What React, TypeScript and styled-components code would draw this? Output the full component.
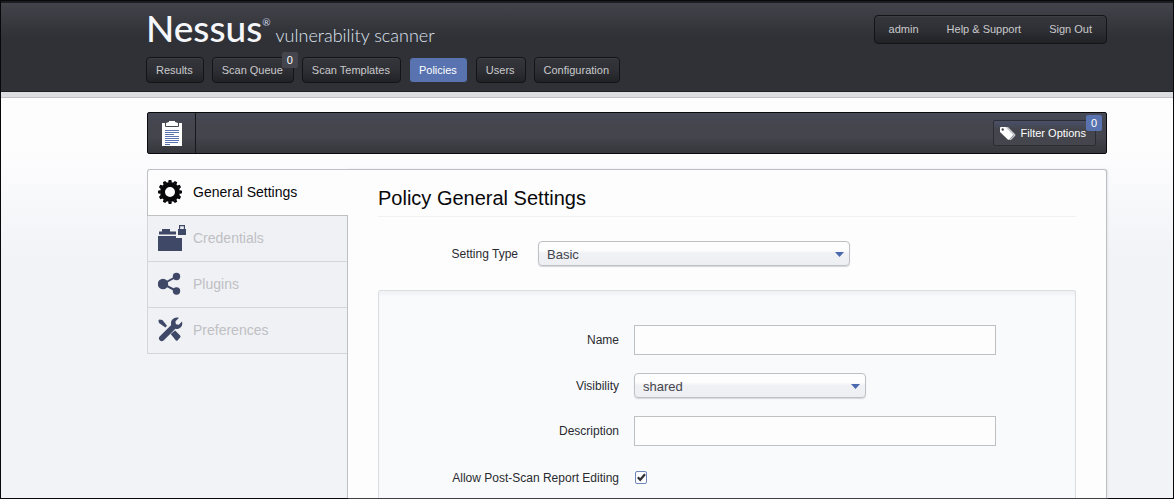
import React from "react";
import styled, { createGlobalStyle, css } from "styled-components";

const GlobalStyle = createGlobalStyle`
  *, *::before, *::after { box-sizing: border-box; }
  body {
    margin: 0;
    background: #f2f3f7;
    font-family: Arial, "Liberation Sans", sans-serif;
    font-size: 12px;
    color: #2a2b30;
  }
  a { color: inherit; text-decoration: none; }
`;

const Page = styled.div`
  min-height: 100vh;
  display: flex;
  flex-direction: column;
  border: 1px solid #08080a;
  background: linear-gradient(#fdfdfe 150px, #f2f3f7 256px);
`;

const Header = styled.header`
  display: flex;
  justify-content: space-between;
  align-items: flex-start;
  height: 97px;
  padding: 0 66px 0 145px;
  border-top: 2px solid #1c1d21;
  border-bottom: 1px solid #bfc0c4;
  box-shadow: inset 0 -5px 0 #dcdde1, inset 0 -6px 0 #1f2024;
  background: linear-gradient(#43444b, #303136 34px);
`;

const Logo = styled.a`
  display: flex;
  align-items: baseline;
  height: 40px;
  margin-top: 5px;
  font-family: Lato, sans-serif;
  color: #f6f7fb;
  line-height: 40px;
`;

const Brand = styled.span`
  font-size: 37px;
  font-weight: 500;
`;

const Registered = styled.sup`
  align-self: flex-start;
  font-size: 10px;
  line-height: 28px;
  color: #c9d2e8;
`;

const Tagline = styled.span`
  margin-left: 5px;
  font-size: 18px;
  font-weight: 300;
  color: #dfe4f1;
`;

const Nav = styled.nav`
  display: flex;
  gap: 8px;
  margin-top: 9px;
`;

const raised = css`
  border: 1px solid #131417;
  border-radius: 4px;
  background: linear-gradient(#35363b, #2f3035 50%, #212226);
  box-shadow: inset 0 1px 0 #3d3e44;
`;

const NavItem = styled.a<{ $active?: boolean }>`
  position: relative;
  height: 26px;
  padding: 0 10px 0 9px;
  font-size: 11px;
  line-height: 25px;
  color: #c9c9cb;
  white-space: nowrap;
  ${raised}
  ${(p) =>
    p.$active &&
    css`
      color: #ffffff;
      background: #5873b0;
      border-color: #303136;
      box-shadow: none;
    `}
`;

const Badge = styled.span<{ $accent?: boolean }>`
  position: absolute;
  top: -6px;
  right: ${(p) => (p.$accent ? "-7px" : "-5px")};
  width: 16px;
  height: 16px;
  border-radius: 2px;
  background: ${(p) => (p.$accent ? "#5873b0" : "#44454d")};
  color: #ffffff;
  font-size: 11px;
  line-height: 16px;
  text-align: center;
`;

const UserMenu = styled.nav`
  display: flex;
  gap: 28px;
  height: 29px;
  margin-top: 12px;
  padding: 0 14px;
  font-size: 11px;
  line-height: 27px;
  color: #c9c9cb;
  white-space: nowrap;
  ${raised}
`;

const Body = styled.div`
  flex: 1;
  display: flex;
  flex-direction: column;
  padding: 14px 66px 0 146px;
`;

const Toolbar = styled.div`
  display: flex;
  justify-content: space-between;
  align-items: center;
  height: 42px;
  padding-right: 10px;
  border: 1px solid #0b0b0e;
  border-radius: 2px;
  background: linear-gradient(#474a57, #44454d 30%, #44454d 60%, #36373c);
`;

const ToolbarIcon = styled.span`
  display: flex;
  align-items: center;
  justify-content: center;
  width: 48px;
  height: 40px;
  border-right: 1px solid #17181b;
`;

const FilterButton = styled.button`
  position: relative;
  display: flex;
  align-items: center;
  gap: 5px;
  height: 26px;
  padding: 0 9px 0 6px;
  border: 1px solid #2c2d32;
  border-radius: 2px;
  background: linear-gradient(#4a5068, #44454d 35%);
  color: #ffffff;
  font: 11px Arial, "Liberation Sans", sans-serif;
  white-space: nowrap;
`;

const Main = styled.div`
  flex: 1;
  display: flex;
  margin-top: 15px;
`;

const Sidebar = styled.nav`
  flex: 0 0 200px;
`;

const Tab = styled.a<{ $active?: boolean }>`
  display: grid;
  grid-template-columns: 29px 1fr;
  gap: 6px;
  align-items: center;
  height: 46px;
  padding: 0 0 2px 10px;
  border: solid #d5d6da;
  border-width: 0 0 1px 1px;
  background: #f0f1f5;
  color: #bfc0c3;
  font-size: 14px;
  ${(p) =>
    p.$active &&
    css`
      position: relative;
      height: 47px;
      margin-right: -1px;
      border-width: 1px 0 1px 1px;
      border-color: #bfc0c4;
      border-top-left-radius: 3px;
      background: #fdfdfe;
      color: #08080a;
    `}
`;

const Content = styled.main`
  flex: 1;
  display: flex;
  flex-direction: column;
  padding: 0 30px;
  border: 1px solid #bfc0c4;
  border-bottom: 0;
  border-top-right-radius: 3px;
  background: #fdfdfe;
  box-shadow: 1px 0 2px #e3e4e8;
`;

const Title = styled.h1`
  margin: 0 0 24px;
  padding: 16px 0 6px;
  border-bottom: 1px solid #f0f1f4;
  color: #08080a;
  font-size: 20px;
  font-weight: 400;
  line-height: 24px;
`;

const Row = styled.div<{ $label: number; $gap: number }>`
  display: grid;
  grid-template-columns: ${(p) => p.$label}px 1fr;
  column-gap: ${(p) => p.$gap}px;
  align-items: center;
`;

const Label = styled.label`
  text-align: right;
  line-height: 16px;
  white-space: nowrap;
`;

const Fields = styled.section`
  flex: 1;
  display: flex;
  flex-direction: column;
  gap: 18px;
  margin-top: 24px;
  padding-top: 34px;
  border: 1px solid #dcdde1;
  border-bottom: 0;
  border-radius: 3px 3px 0 0;
  background: #f9fafc;
  box-shadow: inset 0 4px 2px #f2f3f7;
`;

const TextBox = styled.input`
  width: 362px;
  max-width: 100%;
  height: 30px;
  padding: 0 8px;
  border: 1px solid #bfc0c4;
  background: #fdfdfe;
  font: 13px Arial, "Liberation Sans", sans-serif;
`;

const SelectFrame = styled.span<{ $width: number }>`
  position: relative;
  display: block;
  width: ${(p) => p.$width}px;
  max-width: 100%;
  svg {
    position: absolute;
    right: 6px;
    top: 11px;
    pointer-events: none;
  }
`;

const SelectBox = styled.select`
  display: block;
  appearance: none;
  width: 100%;
  height: 25px;
  padding: 1px 24px 0 8px;
  border: 1px solid #bfc0c4;
  border-radius: 4px;
  background: linear-gradient(#fdfdfe 35%, #f0f1f5 50%, #eeeff3);
  box-shadow: 0 1px 1px #d5d6da;
  color: #44454d;
  font: 13px Arial, "Liberation Sans", sans-serif;
`;

const CheckFrame = styled.span`
  position: relative;
  display: block;
  height: 28px;
  padding: 7px 0 0 1px;
  svg {
    position: absolute;
    left: 3px;
    top: 9px;
    pointer-events: none;
  }
`;

const CheckBox = styled.input`
  display: block;
  appearance: none;
  width: 12px;
  height: 13px;
  margin: 0;
  border: 1px solid #6f86bb;
  border-radius: 2px;
  background: #fdfdfe;
  & + svg {
    visibility: hidden;
  }
  &:checked + svg {
    visibility: visible;
  }
`;

const ClipboardIcon = () => (
  <svg width="20" height="26" viewBox="0 0 20 26" aria-hidden="true">
    <path d="M0 3h3v3h14V3h3v23H0z" fill="#fff" />
    <path d="M4 6V3l3-1V1h6v1l3 1v3z" fill="#fff" />
    <path d="M3.500 4v2.500h13V4" fill="none" stroke="#44454d" />
    <path d="M3 10.500h14M3 12.500h14M3 14.500h9M3 16.500h14M3 18.500h14M3 20.500h14M3 22.500h13M3 24.500h5" stroke="#5873b0" />
  </svg>
);

const TagsIcon = () => (
  <svg width="16" height="13" viewBox="0 0 16 13" aria-hidden="true">
    <path d="M4.500 0H8l7 7q1 1 0 2l-4 4H9l4.500-4.500z" fill="#c4c5ca" />
    <path fillRule="evenodd" d="M0 1q0-1 1-1h4.500l7 7q1 1 0 2l-3 3.200q-1 1-2 0L0 5zM1.500 2.500a1.200 1.200 0 1 0 2.400 0 1.200 1.200 0 1 0-2.400 0z" fill="#fff" />
  </svg>
);

const GearIcon = () => (
  <svg width="24" height="24" viewBox="-12 -12 24 24" aria-hidden="true">
    <circle r="7.500" fill="none" stroke="#08080a" strokeWidth="5" />
    {Array.from({ length: 12 }, (_, i) => (
      <path key={i} d="M-2-9.500L-1.300-12h2.600L2-9.500z" fill="#08080a" transform={`rotate(${i * 30})`} />
    ))}
  </svg>
);

const FolderIcon = () => (
  <svg width="29" height="26" viewBox="0 0 29 26" fill="#3f4866" aria-hidden="true">
    <path d="M0 11h18v2h6v13H0z" />
    <path d="M1 6.500h3V4h8v2.500h6V9.500H1z" />
    <path d="M20 4h8v6h-8z" />
    <path d="M21.600 5V.6h4.800V5" fill="none" stroke="#3f4866" strokeWidth="1.200" />
  </svg>
);

const ShareIcon = () => (
  <svg width="24" height="24" viewBox="0 0 24 24" fill="#3f4866" aria-hidden="true">
    <circle cx="5" cy="12" r="5.200" />
    <circle cx="18.500" cy="4.500" r="3.700" />
    <circle cx="18.500" cy="19" r="3.700" />
    <path d="M18.500 4.500L5 12l13.500 7" fill="none" stroke="#3f4866" strokeWidth="2" />
  </svg>
);

const ToolsIcon = () => (
  <svg width="25" height="25" viewBox="0 0 25 25" fill="#3f4866" aria-hidden="true">
    <path d="M1.400 2.400l3 .6 4.600 5.800-1.600 1.600L1 6 .4 3.400z" />
    <path d="M12.700 17l4.400-3.600 5 5q1 1 0 2l-2.400 2.800q-1 1-2 0z" />
    <path d="M21 .8l-3.600 3.700.5 2.700 2.900.5L24 4.500q1.200 4.600-2 6.600-2.200 1.300-4.600.6L5.600 23.600q-2 1.300-3.600 0-2-2-.4-4L13.200 8q-.8-3 .9-5.200Q16.800-.2 21 .8z" />
  </svg>
);

const ArrowIcon = () => (
  <svg width="9" height="5" viewBox="0 0 9 5" aria-hidden="true">
    <path d="M0 0h9L4.500 5z" fill="#4a68ae" />
  </svg>
);

const CheckIcon = () => (
  <svg width="9" height="9" viewBox="0 0 9 9" aria-hidden="true">
    <path d="M.8 4.200l2.400 2.600L8 1.200" fill="none" stroke="#303136" strokeWidth="2.200" />
  </svg>
);

const navItems = [
  { name: "Results" },
  { name: "Scan Queue", count: 0 },
  { name: "Scan Templates" },
  { name: "Policies", active: true },
  { name: "Users" },
  { name: "Configuration" },
];

const tabs = [
  { name: "General Settings", Icon: GearIcon, active: true },
  { name: "Credentials", Icon: FolderIcon },
  { name: "Plugins", Icon: ShareIcon },
  { name: "Preferences", Icon: ToolsIcon },
];

type SelectProps = { id: string; width: number; options: string[] };

const Select = ({ id, width, options }: SelectProps) => (
  <SelectFrame $width={width}>
    <SelectBox id={id}>
      {options.map((o) => (
        <option key={o}>{o}</option>
      ))}
    </SelectBox>
    <ArrowIcon />
  </SelectFrame>
);

type FieldProps = { id: string; label: string; children: React.ReactNode };

const Field = ({ id, label, children }: FieldProps) => (
  <Row $label={240} $gap={15}>
    <Label htmlFor={id}>{label}</Label>
    {children}
  </Row>
);

export default function App() {
  return (
    <>
      <GlobalStyle />
      <Page>
        <Header>
          <div>
            <Logo href="#">
              <Brand>Nessus</Brand>
              <Registered>®</Registered>
              <Tagline>vulnerability scanner</Tagline>
            </Logo>
            <Nav>
              {navItems.map((item) => (
                <NavItem key={item.name} href="#" $active={item.active}>
                  {item.name}
                  {item.count !== undefined && <Badge>{item.count}</Badge>}
                </NavItem>
              ))}
            </Nav>
          </div>
          <UserMenu>
            <a href="#">admin</a>
            <a href="#">Help &amp; Support</a>
            <a href="#">Sign Out</a>
          </UserMenu>
        </Header>
        <Body>
          <Toolbar>
            <ToolbarIcon>
              <ClipboardIcon />
            </ToolbarIcon>
            <FilterButton type="button">
              <TagsIcon />
              Filter Options
              <Badge $accent>0</Badge>
            </FilterButton>
          </Toolbar>
          <Main>
            <Sidebar>
              {tabs.map(({ name, Icon, active }) => (
                <Tab key={name} href="#" $active={active}>
                  <Icon />
                  {name}
                </Tab>
              ))}
            </Sidebar>
            <Content>
              <Title>Policy General Settings</Title>
              <Row $label={140} $gap={20}>
                <Label htmlFor="type">Setting Type</Label>
                <Select id="type" width={312} options={["Basic", "Advanced"]} />
              </Row>
              <Fields>
                <Field id="name" label="Name">
                  <TextBox id="name" type="text" />
                </Field>
                <Field id="visibility" label="Visibility">
                  <Select id="visibility" width={232} options={["shared", "private"]} />
                </Field>
                <Field id="description" label="Description">
                  <TextBox id="description" type="text" />
                </Field>
                <Field id="editing" label="Allow Post-Scan Report Editing">
                  <CheckFrame>
                    <CheckBox id="editing" type="checkbox" defaultChecked />
                    <CheckIcon />
                  </CheckFrame>
                </Field>
              </Fields>
            </Content>
          </Main>
        </Body>
      </Page>
    </>
  );
}
